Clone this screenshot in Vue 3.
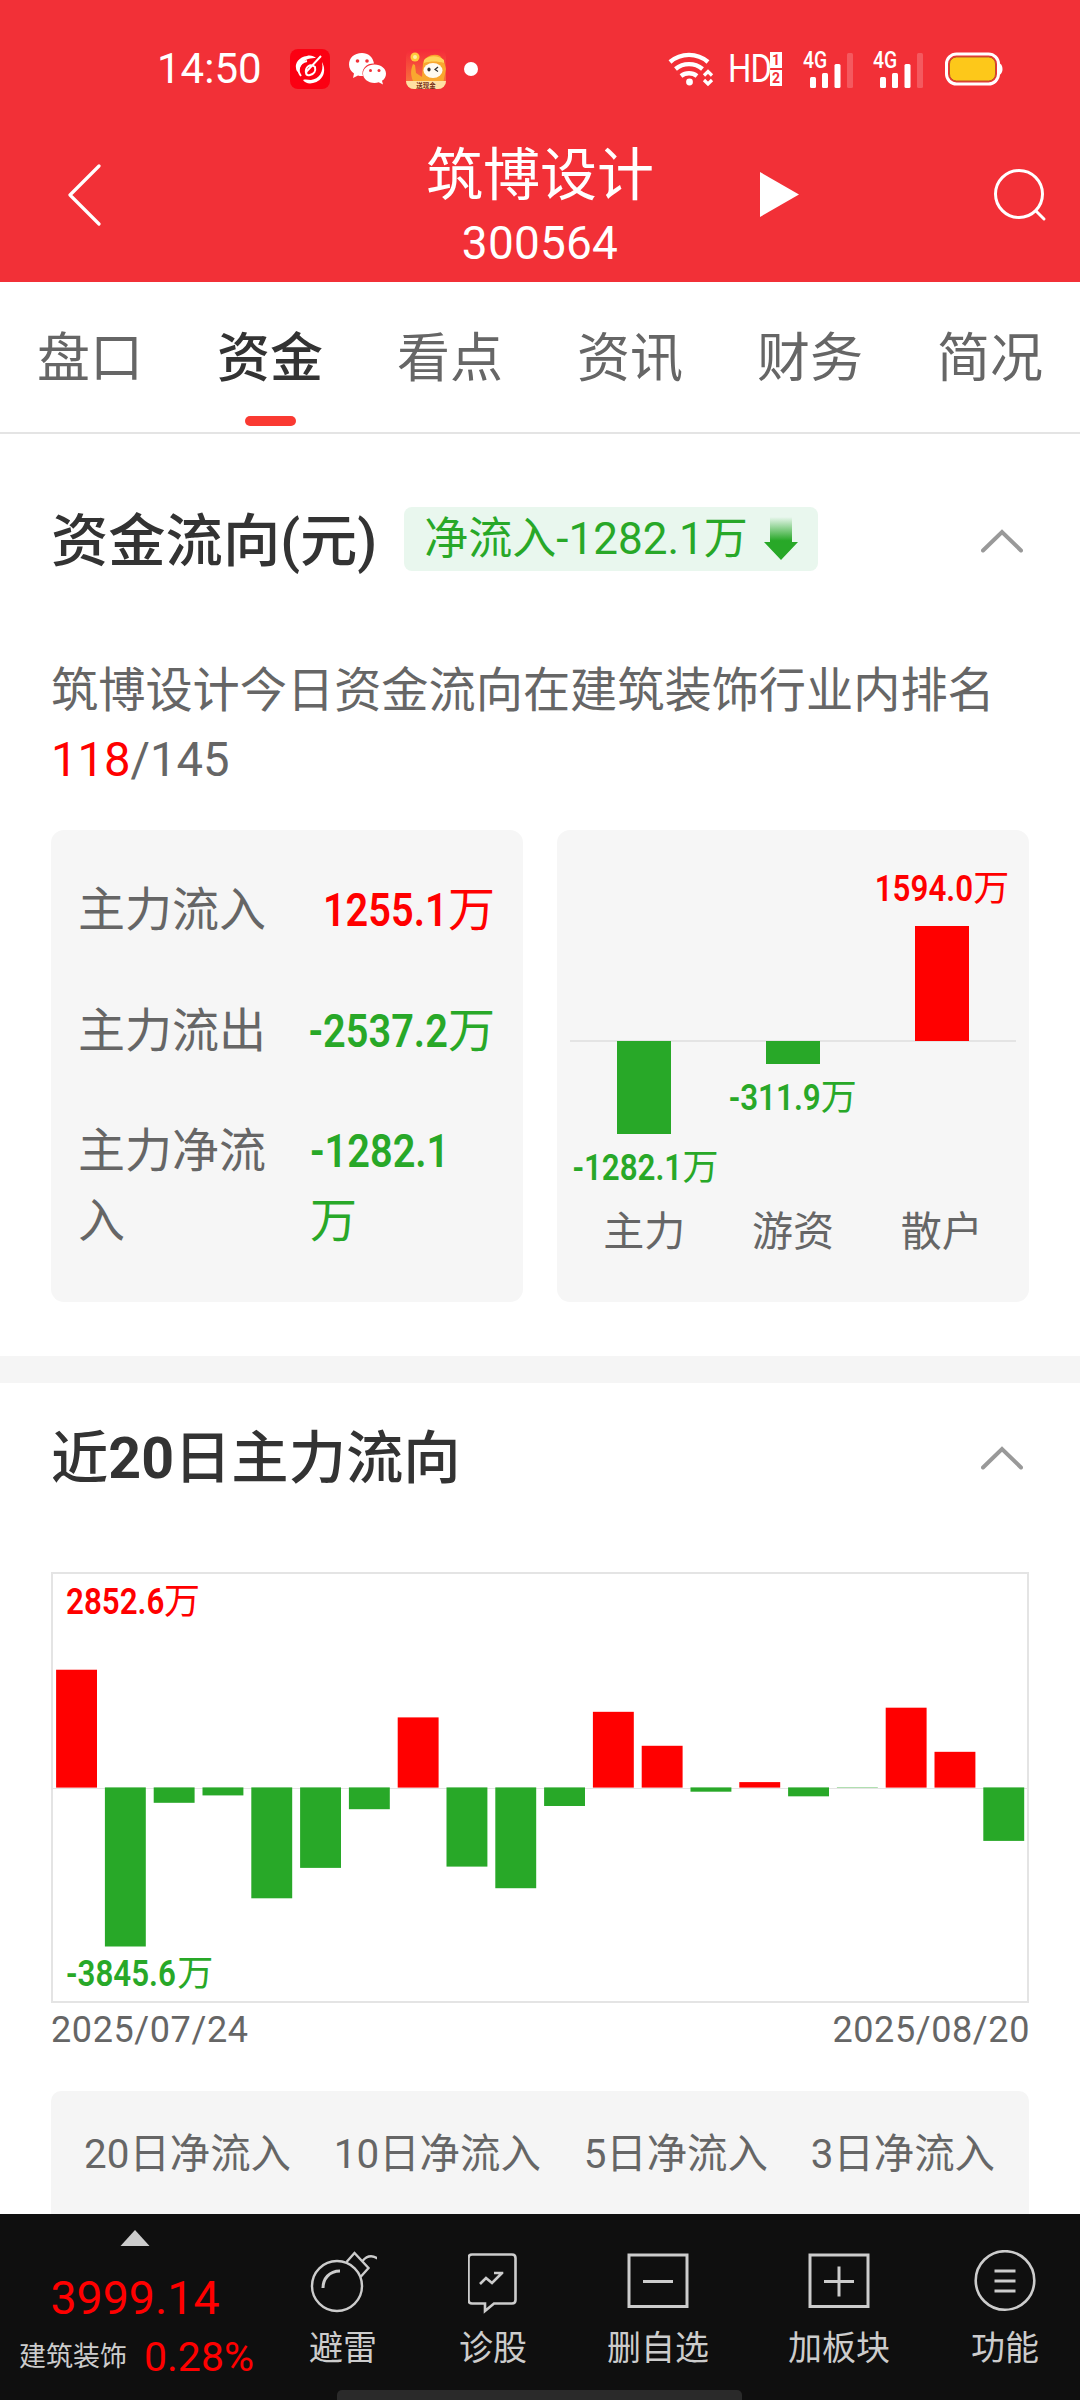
<script setup>
const tabs = ['盘口', '资金', '看点', '资讯', '财务', '简况']
const activeTab = '资金'

const summary = [
  { label: '主力流入', value: '1255.1', up: true },
  { label: '主力流出', value: '-2537.2', up: false },
  { label: '主力净流入', value: '-1282.1', up: false, wrap: true },
]

const groups = [
  { name: '主力', value: '-1282.1', height: 93, up: false },
  { name: '游资', value: '-311.9', height: 23, up: false },
  { name: '散户', value: '1594.0', height: 115, up: true },
]

const flow = [
  2852.6, -3845.6, -368, -189, -2679, -1943, -523, 1699, -1912, -2435,
  -445, 1834, 1012, -99, 133, -211, -4, 1934, 866, -1290,
]
const unit = 0.04132
const base = 215.6
const bars = flow.map((v, i) => {
  const h = Math.abs(v) * unit
  return {
    x: 5.1 + i * 48.8,
    y: v > 0 ? base - h : base - 0.2,
    h: v > 0 ? h : h + 0.2,
    fill: v > 0 ? '#ff0000' : '#28a828',
  }
})

const periods = ['20日净流入', '10日净流入', '5日净流入', '3日净流入']
</script>

<template>
  <div class="screen">
    <header class="top">
      <div class="status">
        <span class="clock">14:50</span>
        <svg class="app" width="40" height="40" viewBox="0 0 40 40">
          <rect width="40" height="40" rx="8" fill="#fb0012" />
          <path d="M17 7C9 8 5 14 6 19c0 3 2 4 3 5 0-6 3-12 9-14 3-1 6-1 8-1-2-2-6-3-9-2z" fill="#fff" />
          <path d="M32 13c5 9 1 19-9 21-4 1-8 0-10-3 3-1 5 0 8 0 8-1 13-8 11-18z" fill="#fff" />
          <path d="M11 27c-4-5-3-13 6-15" fill="none" stroke="#fff" stroke-width="2" />
          <path d="M31 7 17 22c-2 3 0 5 3 4 4-1 6-4 5-8-5-4-10 0-9 6" fill="none" stroke="#fff" stroke-width="2" />
        </svg>
        <svg class="wechat" width="40" height="34" viewBox="0 0 40 34">
          <path d="M14 1C6 1 1 6 1 12.500c0 4 2 7 5 9L5 26l5-2.600c1.500.4 3 .6 5 .5a11 9.500 0 0 1 11-12.400C25 5 20 1 14 1z" fill="#fff" />
          <path d="M26.500 12.500C20 12.500 15 16.500 15 21.700c0 5 5 9.200 11.500 9.200 1.500 0 3-.2 4.200-.6l4.300 2.300-1-3.800c2.600-1.700 4-4.200 4-7.100 0-5.200-5-9.200-11.500-9.200z" fill="#fff" />
          <g fill="#f23037"><circle cx="9.500" cy="9" r="1.800" /><circle cx="19" cy="9" r="1.800" /><circle cx="22.500" cy="18.500" r="1.500" /><circle cx="31" cy="18.500" r="1.500" /></g>
        </svg>
        <svg class="cash" width="40" height="40" viewBox="0 0 40 40">
          <defs>
            <linearGradient id="cashBg" x1="0" y1="0" x2="0" y2="1"><stop offset="0" stop-color="#f5293a" /><stop offset="1" stop-color="#f8813c" /></linearGradient>
            <clipPath id="cashClip"><rect width="40" height="40" rx="8" /></clipPath>
          </defs>
          <g clip-path="url(#cashClip)">
            <rect width="40" height="40" fill="url(#cashBg)" />
            <path d="M7 32c-3-7-2-12 0-17l2 1 1 8 6 4 1-14c2-7 11-10 17-7l4 5 2 8-3 15H7z" fill="#f9a72f" />
            <path d="M18 11c5-5 14-5 20 0v3c-6-2-14-2-20 0z" fill="#ffd35a" />
            <circle cx="9" cy="8" r="4.500" fill="#ffc83c" /><circle cx="9" cy="8" r="2" fill="#fff0a5" />
            <ellipse cx="27" cy="21.500" rx="9.500" ry="7.500" fill="#fffaf0" />
            <ellipse cx="23" cy="20.500" rx="1.600" ry="2" fill="#333" />
            <path d="m32 18-3 2.500 3 2" fill="none" stroke="#333" stroke-width="1.200" />
            <path d="M0 32h40v8H0z" fill="#ffe0a4" />
            <text x="20" y="38.500" text-anchor="middle" font-size="6.500" font-weight="700" fill="#783118">送现金</text>
          </g>
        </svg>
        <i class="dot"></i>
        <span class="spring"></span>
        <svg width="46" height="38" viewBox="0 0 46 38" fill="none" stroke="#fff">
          <path d="M2 12a29 29 0 0 1 38 0" stroke-width="4.400" /><path d="M7.500 19a21 21 0 0 1 27 0" stroke-width="4.400" /><path d="M13 26a13 13 0 0 1 16 0" stroke-width="4.400" />
          <circle cx="21.500" cy="32" r="3.400" fill="#fff" stroke="none" />
          <path d="m36 25.500 4-4 4 4M36 30l4 4 4-4" stroke-width="3.200" />
        </svg>
        <div class="hd"><span>HD</span><div class="sims"><b>1</b><b>2</b></div></div>
        <div v-for="n in 2" :key="n" class="cell">
          <span class="gen">4G</span>
          <svg width="46" height="36" viewBox="0 0 46 36" fill="#fff">
            <rect x="1" y="25" width="6" height="11" rx="1.500" /><rect x="13" y="21" width="6" height="15" rx="1.500" /><rect x="25.500" y="12" width="6" height="24" rx="1.500" /><rect x="38" y="1" width="6" height="35" rx="1.500" opacity=".2" />
          </svg>
        </div>
        <svg class="battery" width="58" height="34" viewBox="0 0 58 34">
          <rect x="1.500" y="2" width="52" height="30" rx="10" fill="none" stroke="#fff" stroke-width="3" />
          <rect x="4.500" y="5" width="46" height="24" rx="7" fill="#fdc81a" stroke="#b9552a" stroke-width="1" />
          <path d="M54.500 11q3 2 3 6t-3 6z" fill="#fff" />
        </svg>
      </div>
      <div class="nav">
        <svg class="back" width="34" height="62" viewBox="0 0 34 62"><path d="M32 2 3 31l29 29" fill="none" stroke="#fff" stroke-width="3.200" stroke-linecap="round" stroke-linejoin="round" /></svg>
        <div class="stock"><div class="name">筑博设计</div><div class="code">300564</div></div>
        <svg class="play" width="39" height="45" viewBox="0 0 39 45"><path d="M0 0 39 22.500 0 45z" fill="#fff" /></svg>
        <svg class="search" width="54" height="54" viewBox="0 0 54 54" fill="none" stroke="#fff" stroke-width="3"><circle cx="26" cy="26" r="23.500" /><path d="m43 43 8 8" stroke-linecap="round" /></svg>
      </div>
    </header>

    <nav class="tabs">
      <div v-for="t in tabs" :key="t" class="tab" :class="{ active: t === activeTab }"><span>{{ t }}</span></div>
    </nav>

    <section class="funds">
      <div class="head">
        <h2>资金流向(元)</h2>
        <div class="badge">
          <span>净流入-1282.1万</span>
          <svg width="34" height="44" viewBox="0 0 34 44">
            <defs><linearGradient id="fall" x1="0" y1="0" x2="0" y2="1"><stop offset="0" stop-color="#28a828" stop-opacity="0" /><stop offset=".55" stop-color="#28a828" /></linearGradient></defs>
            <path d="M6 0h22v25h6L17 43 0 25h6z" fill="url(#fall)" />
          </svg>
        </div>
        <svg class="fold" width="42" height="24" viewBox="0 0 42 24"><path d="M2 21.500 21 3l19 18.500" fill="none" stroke="#999" stroke-width="4" stroke-linecap="round" /></svg>
      </div>
      <p class="rank">筑博设计今日资金流向在建筑装饰行业内排名<br /><em>118</em>/145</p>
      <div class="cards">
        <div class="card list">
          <div v-for="s in summary" :key="s.label" class="row" :class="{ wrap: s.wrap }">
            <span class="label">{{ s.label }}</span>
            <span class="value" :class="s.up ? 'up' : 'down'"><b class="num">{{ s.value }}</b><br v-if="s.wrap" />万</span>
          </div>
        </div>
        <div class="card split">
          <div class="plot">
            <div v-for="g in groups" :key="g.name" class="col" :class="g.up ? 'up' : 'down'">
              <div class="half upper"><template v-if="g.up"><span class="amount"><b class="num">{{ g.value }}</b>万</span><i class="bar" :style="{ height: g.height + 'px' }"></i></template></div>
              <div class="half lower"><template v-if="!g.up"><i class="bar" :style="{ height: g.height + 'px' }"></i><span class="amount"><b class="num">{{ g.value }}</b>万</span></template></div>
            </div>
          </div>
          <div class="names"><span v-for="g in groups" :key="g.name">{{ g.name }}</span></div>
        </div>
      </div>
    </section>

    <section class="history">
      <div class="head">
        <h2>近<b>20</b>日主力流向</h2>
        <svg class="fold" width="42" height="24" viewBox="0 0 42 24"><path d="M2 21.500 21 3l19 18.500" fill="none" stroke="#999" stroke-width="4" stroke-linecap="round" /></svg>
      </div>
      <div class="chart">
        <svg width="978" height="431" viewBox="0 0 978 431">
          <rect x="1" y="1" width="976" height="429" fill="none" stroke="#e4e4e4" stroke-width="2" />
          <path d="M2 216.500H976" stroke="#e4e4e4" />
          <rect v-for="(b, i) in bars" :key="i" :x="b.x" :y="b.y" width="40.900" :height="b.h" :fill="b.fill" />
        </svg>
        <span class="amount max up"><b class="num">2852.6</b>万</span>
        <span class="amount min down"><b class="num">-3845.6</b>万</span>
      </div>
      <div class="dates"><span>2025/07/24</span><span>2025/08/20</span></div>
      <div class="periods"><span v-for="p in periods" :key="p">{{ p }}</span></div>
    </section>

    <footer class="bottom">
      <div class="index">
        <svg width="30" height="16" viewBox="0 0 30 16"><path d="M15 0 29.500 16H.5z" fill="#ccc" /></svg>
        <div class="point">3999.14</div>
        <div class="sector"><span>建筑装饰</span><strong>0.28%</strong></div>
      </div>
      <div class="tool" style="width: 146px">
        <svg width="68" height="64" viewBox="0 0 68 64" fill="none" stroke="#ccc" stroke-width="2.400">
          <g transform="translate(1.500)"><circle cx="26.500" cy="36" r="25" /><path d="M36 12 44 3l14 15-8 9M52 11c5-6 10-6 16-2" /><path d="M12.500 38c0-9 6-17 17-17" stroke-width="3" /></g>
        </svg>
        <span>避雷</span>
      </div>
      <div class="tool" style="width: 154px">
        <svg width="50" height="64" viewBox="0 0 50 64" fill="none" stroke="#ccc" stroke-width="2.600">
          <path d="M5 4.500h40q3.500 0 3.500 3.500v42q0 3.500-3.500 3.500H27l-9 7.500v-7.500H5q-3.500 0-3.500-3.500V8q0-3.500 3.500-3.500z" transform="translate(-1)" /><path d="m12 34 6-6 6 5 10-10m-8 0h8v1" />
        </svg>
        <span>诊股</span>
      </div>
      <div class="tool" style="width: 176px">
        <svg width="62" height="64" viewBox="0 0 62 64" fill="none" stroke="#ccc" stroke-width="3"><path d="M2 5h58v51.500H2zM16 31.500h30" /></svg>
        <span>删自选</span>
      </div>
      <div class="tool" style="width: 186px">
        <svg width="62" height="64" viewBox="0 0 62 64" fill="none" stroke="#ccc" stroke-width="3"><path d="M2 5h58v51.500H2zM16 31.500h30M31 16.500v30" /></svg>
        <span>加板块</span>
      </div>
      <div class="tool" style="width: 146px">
        <svg width="62" height="64" viewBox="0 0 62 64" fill="none" stroke="#ccc" stroke-width="3"><circle cx="31" cy="30.500" r="29.300" stroke-width="2.600" /><path d="M20.500 21h21M20.500 31h21M20.500 41h21" /></svg>
        <span>功能</span>
      </div>
      <i class="home"></i>
    </footer>
  </div>
</template>

<style>
body { margin: 0; background: #fff; }
</style>

<style scoped>
.screen {
  width: 1080px; height: 2400px; overflow: hidden; position: relative;
  display: flex; flex-direction: column; background: #fff;
  font-family: Roboto, "Noto Sans CJK SC", sans-serif; color: #666;
}
.screen svg { display: block; flex: none; }
.up { color: #f00; }
.down { color: #28a828; }

.top { height: 282px; flex: none; background: #f23037; color: #fff; }
.status { height: 138px; box-sizing: border-box; padding: 0 77px 0 157px; display: flex; align-items: center; }
.clock { font-size: 42px; line-height: 50px; width: 133px; }
.wechat { margin-left: 18px; }
.cash { margin-left: 18px; }
.dot { width: 14px; height: 14px; border-radius: 50%; background: #fff; margin-left: 18px; }
.spring { flex: 1; }
.hd { display: flex; align-items: center; margin-left: 14px; width: 57px; }
.hd span { font-size: 38px; line-height: 38px; letter-spacing: -1px; width: 43px; transform: scaleX(.86); transform-origin: left; margin-right: -1px; }
.sims { display: flex; flex-direction: column; gap: 2px; }
.sims b { width: 12px; height: 16px; background: #fff; color: #f23037; font-size: 14px; line-height: 16px; text-align: center; }
.cell { position: relative; margin-left: 24px; width: 46px; padding-top: 1px; box-sizing: border-box; }
.gen { position: absolute; left: -6px; top: -1px; font-size: 23px; line-height: 22px; font-weight: 500; transform: scaleX(.84); transform-origin: left; }
.battery { margin-left: 20px; }

.nav { height: 144px; display: flex; align-items: flex-start; }
.back { margin: 26px 0 0 67px; }
.stock { width: 240px; margin: 1px 0 0 319px; text-align: center; }
.name { font-size: 57px; line-height: 70px; margin-top: 2px; white-space: nowrap; }
.code { font-size: 46px; line-height: 50px; margin-top: 7px; letter-spacing: .2px; }
.play { margin: 34px 0 0 100px; }
.search { margin: 30px 0 0 194px; }

.tabs { height: 152px; box-sizing: border-box; border-bottom: 2px solid #e4e4e4; display: flex; flex: none; }
.tab { width: 180px; display: flex; flex-direction: column; align-items: center; font-size: 53px; line-height: 80px; padding-top: 37px; }
.tab.active { color: #333; font-weight: 500; }
.tab.active::after { content: ""; width: 51px; height: 10px; border-radius: 5px; background: #fa3a32; margin-top: 17px; }

.head { display: flex; align-items: center; padding: 0 57px 0 51px; height: 64px; }
h2 { margin: 5px 0 0; font-size: 57.300px; line-height: 64px; font-weight: 500; color: #333; white-space: nowrap; }
h2 b { font-weight: 700; }
.fold { margin: 3px 0 0 auto; }
.funds { height: 922px; flex: none; box-sizing: border-box; padding-top: 73px; }
.badge { margin-left: 27px; width: 414px; box-sizing: border-box; height: 64px; border-radius: 8px; background: #e9f7ee; color: #28a828; display: flex; align-items: center; padding-left: 20px; font-size: 44px; line-height: 64px; white-space: nowrap; }
.badge span { width: 340px; }
.rank { margin: 86px 51px 0; font-size: 47.200px; line-height: 69px; white-space: nowrap; }
.rank em { font-style: normal; color: #f00; }
.cards { display: flex; justify-content: space-between; margin: 35px 51px 0; }
.card { width: 472px; height: 472px; box-sizing: border-box; border-radius: 13px; background: #f6f6f6; }
.list { padding: 45px 28px 0 27px; }
.row { display: flex; justify-content: space-between; font-size: 47px; line-height: 70px; margin-bottom: 50.500px; }
.label { width: 190px; flex: none; }
.value { white-space: nowrap; }
.num { display: inline-block; font-weight: 600; transform: scaleX(.87); transform-origin: right; }
.list .num { transform: scaleX(.845); }
.row.wrap .value { width: 185px; }
.row.wrap .num { transform-origin: left; }

.split { padding: 0 13px; }
.plot { display: flex; height: 364px; background: linear-gradient(#e4e4e4, #e4e4e4) 0 210px / 100% 2px no-repeat; }
.col { flex: 1; display: flex; flex-direction: column; align-items: center; min-width: 0; }
.half { display: flex; flex-direction: column; align-items: center; }
.upper { height: 211px; justify-content: flex-end; }
.bar { width: 54px; background: currentColor; display: block; }
.amount { font-size: 36px; line-height: 42px; white-space: nowrap; }
.upper .amount { margin-bottom: 16px; }
.lower .amount { margin-top: 13px; }
.col .num { margin-left: -14px; }
.names { display: flex; font-size: 41px; line-height: 60px; margin-top: 8px; }
.names span { flex: 1; text-align: center; }

.history { border-top: 27px solid #f5f5f5; padding-top: 41px; flex: 1; min-height: 0; }
.chart { position: relative; margin: 84px 51px 0; height: 431px; }
.chart .amount { position: absolute; left: 15px; }
.chart .num { transform-origin: left; margin-right: -15px; }
.max { top: 9px; }
.min { bottom: 8px; }
.dates { display: flex; justify-content: space-between; margin: 6px 51px 0; font-size: 36px; line-height: 42px; letter-spacing: .6px; }
.dates span:last-child { margin-right: -1px; }
.periods { display: flex; justify-content: space-between; margin: 40px 51px 0; padding: 34px 34px 80px 33px; border-radius: 10px; background: #f5f5f5; font-size: 40.400px; line-height: 60px; }

.bottom { position: absolute; left: 0; right: 0; bottom: 0; height: 186px; background: #0f0f0f; color: #ccc; display: flex; }
.index { width: 270px; display: flex; flex-direction: column; align-items: center; padding-top: 16px; box-sizing: border-box; }
.point { font-size: 46.500px; line-height: 50px; color: #f00; margin-top: 27px; }
.sector { display: flex; align-items: center; align-self: flex-start; padding-left: 19px; margin-top: 13px; font-size: 27px; line-height: 42px; }
.sector strong { font-weight: 400; font-size: 41px; color: #f00; margin-left: 17px; }
.tool { display: flex; flex-direction: column; align-items: center; padding-top: 36px; box-sizing: border-box; font-size: 34px; line-height: 44px; }
.tool span { margin-top: 12px; }
.home { position: absolute; left: 337px; bottom: 0; width: 405px; height: 10px; border-radius: 5px 5px 0 0; background: #2a2a2a; }
</style>
